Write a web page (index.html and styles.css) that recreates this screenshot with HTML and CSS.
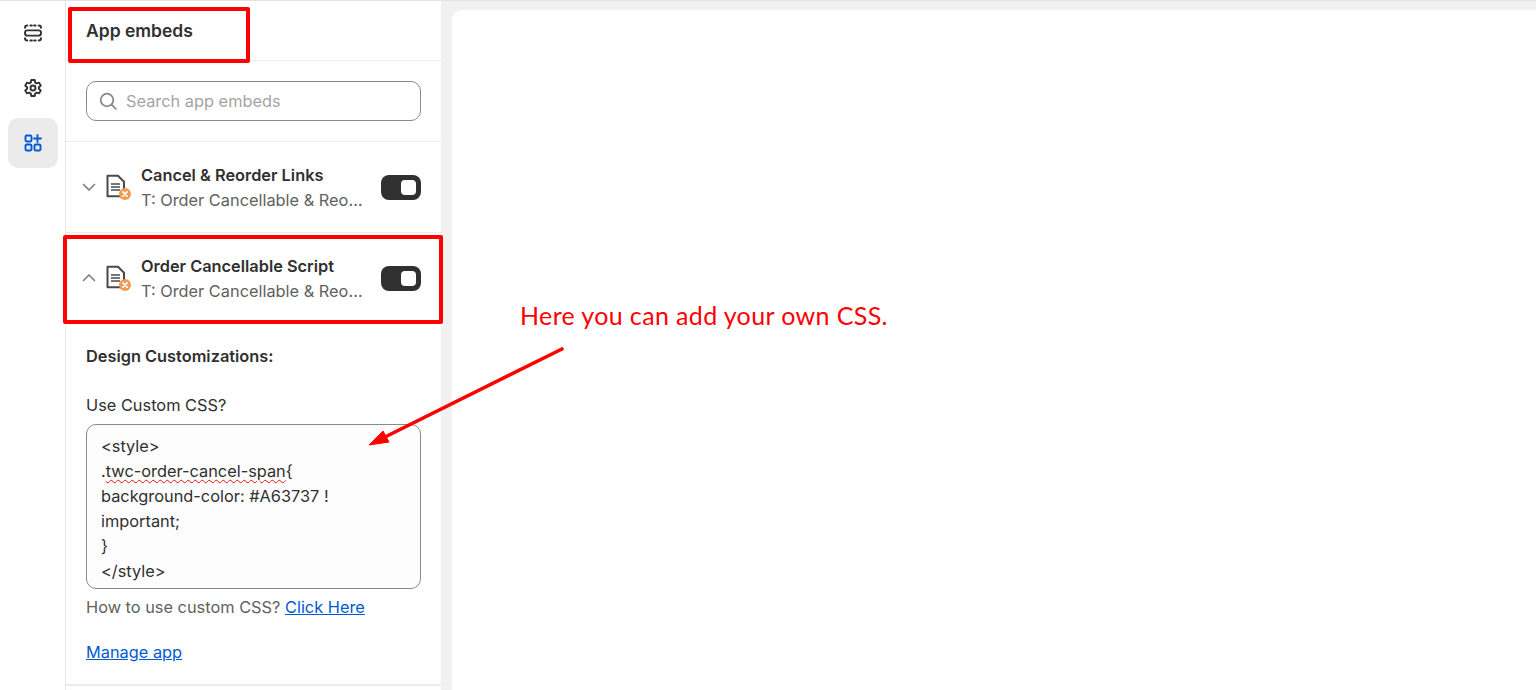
FILE: index.html
```html
<!DOCTYPE html>
<html lang="en">
<head>
<meta charset="utf-8">
<title>App embeds</title>
<link rel="stylesheet" href="styles.css">
</head>
<body>
<div class="app">
  <nav class="rail">
    <button class="rail-btn">
      <svg width="20" height="20" viewBox="0 0 20 20" fill="none" stroke="#303030" stroke-width="1.900" stroke-linecap="round">
        <rect x="2" y="7.400" width="16" height="5.200" rx="2.400"/>
        <path d="M2 4.800c0-1.400.9-2.300 2.300-2.300M7.300 2.500h1.600M11.100 2.500h1.600M15.700 2.500c1.400 0 2.300.9 2.300 2.300M2 15.200c0 1.400.9 2.300 2.300 2.300M7.300 17.500h1.600M11.100 17.500h1.600M15.700 17.500c1.400 0 2.300-.9 2.300-2.300"/>
      </svg>
    </button>
    <button class="rail-btn">
      <svg width="20" height="20" viewBox="0 0 20 20" fill="none" stroke="#303030" stroke-width="1.900" stroke-linejoin="round">
        <circle cx="10" cy="10" r="2.500"/>
        <path d="M8.300 2h3.400l.5 2.500 1.500.9 2.400-.8 1.700 3-1.900 1.600v1.600l1.900 1.600-1.700 3-2.400-.8-1.500.9-.5 2.500H8.300l-.5-2.500-1.500-.9-2.400.8-1.700-3 1.900-1.600V9.200L2.200 7.600l1.700-3 2.400.8 1.500-.9z"/>
      </svg>
    </button>
    <button class="rail-btn rail-btn-active">
      <svg width="20" height="20" viewBox="0 0 20 20" fill="none" stroke="#005bd3" stroke-width="1.900" stroke-linecap="round">
        <rect x="2.500" y="2.500" width="6" height="6" rx="1.200"/>
        <rect x="2.500" y="11.500" width="6" height="6" rx="1.200"/>
        <rect x="11.500" y="11.500" width="6" height="6" rx="1.200"/>
        <path d="M14.500 2v7M11 5.500h7"/>
      </svg>
    </button>
  </nav>

  <aside class="panel">
    <header class="panel-head"><h1 class="panel-title">App embeds</h1></header>

    <div class="search-wrap">
      <label class="search">
        <svg width="20" height="20" viewBox="0 0 20 20" fill="none" stroke="#8a8a8a" stroke-width="1.800" stroke-linecap="round">
          <circle cx="9" cy="9" r="6.300"/>
          <path d="M13.800 13.800l4 4"/>
        </svg>
        <input class="search-input" type="text" placeholder="Search app embeds">
      </label>
    </div>

    <section class="embed">
      <svg class="chev" width="16" height="16" viewBox="0 0 16 16" fill="none" stroke="#808080" stroke-width="1.700" stroke-linecap="round" stroke-linejoin="round"><path d="M2.500 5.500L8 11l5.500-5.500"/></svg>
      <svg class="doc" width="28" height="28" viewBox="0 0 28 28">
        <path d="M2.500 2.800h10.500l6 6v14.500H2.500z" fill="none" stroke="#4a4a4a" stroke-width="2" stroke-linejoin="round"/>
        <path d="M6 11h9M6 14h9M6 17h9" stroke="#4a4a4a" stroke-width="1.500"/>
        <circle cx="20" cy="21" r="6" fill="#f49a50"/>
        <path d="M17.900 18.900l4.200 4.200M22.100 18.900l-4.200 4.200" stroke="#fff" stroke-width="1.800" stroke-linecap="round"/>
      </svg>
      <div class="embed-text">
        <div class="embed-name">Cancel &amp; Reorder Links</div>
        <div class="embed-sub">T: Order Cancellable &amp; Reorder</div>
      </div>
      <span class="toggle"><span class="knob"></span></span>
    </section>

    <section class="embed">
      <svg class="chev" width="16" height="16" viewBox="0 0 16 16" fill="none" stroke="#808080" stroke-width="1.700" stroke-linecap="round" stroke-linejoin="round"><path d="M2.500 10.500L8 5l5.500 5.500"/></svg>
      <svg class="doc" width="28" height="28" viewBox="0 0 28 28">
        <path d="M2.500 2.800h10.500l6 6v14.500H2.500z" fill="none" stroke="#4a4a4a" stroke-width="2" stroke-linejoin="round"/>
        <path d="M6 11h9M6 14h9M6 17h9" stroke="#4a4a4a" stroke-width="1.500"/>
        <circle cx="20" cy="21" r="6" fill="#f49a50"/>
        <path d="M17.900 18.900l4.200 4.200M22.100 18.900l-4.200 4.200" stroke="#fff" stroke-width="1.800" stroke-linecap="round"/>
      </svg>
      <div class="embed-text">
        <div class="embed-name">Order Cancellable Script</div>
        <div class="embed-sub">T: Order Cancellable &amp; Reorder</div>
      </div>
      <span class="toggle"><span class="knob"></span></span>
    </section>

    <section class="settings">
      <h2 class="settings-title">Design Customizations:</h2>
      <div class="field-label">Use Custom CSS?</div>
      <div class="code-box">&lt;style&gt;
.<span class="misspelt">twc-order-cancel-span</span>{
background-color: #A63737 !
important;
}
&lt;/style&gt;</div>
      <p class="help">How to use custom CSS? <a href="#">Click Here</a></p>
      <a class="manage" href="#">Manage app</a>
    </section>
  </aside>

  <main class="canvas-wrap"><div class="canvas"></div></main>
</div>

<div class="mark mark-head"></div>
<div class="mark mark-row"></div>
<div class="note">Here you can add your own CSS.</div>
<svg class="arrow" width="210" height="110" viewBox="0 0 210 110">
  <path d="M202 9L27 96" stroke="#fe0000" stroke-width="3.600" stroke-linecap="round"/>
  <path d="M9 105L23 91L29 102z" fill="#fe0000" stroke="#fe0000" stroke-width="1"/>
</svg>
</body>
</html>
```
FILE: styles.css
```css
* { box-sizing: border-box; }
html, body { margin: 0; height: 100%; overflow: hidden; }
body {
  background: #fff;
  font-family: Inter, "Liberation Sans", sans-serif;
  color: #303030;
  position: relative;
}
.app {
  display: flex;
  height: 690px;
  border-top: 1px solid #e3e3e3;
}
.rail {
  width: 66px;
  flex: none;
  border-right: 1px solid #e6e6e6;
  padding: 7px 8px 0;
  display: flex;
  flex-direction: column;
  gap: 5px;
}
.rail-btn {
  width: 50px;
  height: 50px;
  border: 0;
  padding: 0;
  background: transparent;
  border-radius: 10px;
  display: flex;
  align-items: center;
  justify-content: center;
}
.rail-btn-active { background: #ebebeb; }
.panel {
  width: 375px;
  flex: none;
  display: flex;
  flex-direction: column;
}
.panel-head {
  height: 60px;
  flex: none;
  padding: 18px 20px 0;
  border-bottom: 1px solid #ebebeb;
}
.panel-title {
  margin: 0;
  font-size: 17.5px;
  line-height: 24px;
  font-weight: 600;
}
.search-wrap {
  flex: none;
  height: 81px;
  padding: 20px 20px 0;
  border-bottom: 1px solid #ebebeb;
}
.search {
  height: 40px;
  display: flex;
  align-items: center;
  gap: 8px;
  padding: 0 11px;
  border: 1px solid #8a8a8a;
  border-radius: 10px;
}
.search-input {
  flex: 1;
  min-width: 0;
  border: 0;
  outline: 0;
  padding: 0;
  background: transparent;
  font: 400 16.35px Inter, sans-serif;
}
.search-input::placeholder { color: #a4a4a4; opacity: 1; }
.embed {
  flex: none;
  height: 91px;
  padding: 2px 20px 0 15px;
  display: flex;
  align-items: center;
  border-bottom: 1px solid #ebebeb;
}
.chev { flex: none; margin-top: -2px; }
.doc { flex: none; margin: -2px 8px 0 8px; }
.embed-text { flex: 1; min-width: 0; padding-right: 16px; }
.embed-name {
  font-size: 16.35px;
  line-height: 25px;
  font-weight: 600;
  white-space: nowrap;
}
.embed-sub {
  font-size: 16.35px;
  line-height: 25px;
  color: #616161;
  white-space: nowrap;
  overflow: hidden;
  text-overflow: ellipsis;
}
.toggle {
  flex: none;
  width: 40px;
  height: 25px;
  margin-top: -2px;
  border-radius: 8px;
  background: #303030;
  display: flex;
  align-items: center;
  justify-content: flex-end;
  padding-right: 5px;
}
.knob {
  width: 15px;
  height: 15px;
  border-radius: 4px;
  background: #fff;
}
.settings {
  flex: 1;
  padding: 20px 20px 0;
  border-bottom: 2px solid #ebebeb;
  margin-bottom: 4px;
}
.settings-title {
  margin: 0 0 24px;
  font-size: 16.35px;
  line-height: 25px;
  font-weight: 600;
}
.field-label {
  font-size: 16.35px;
  line-height: 25px;
  margin-bottom: 6px;
}
.code-box {
  height: 165px;
  border: 1px solid #8a8a8a;
  border-radius: 10px;
  background: #fdfdfd;
  padding: 9px 14px 0;
  font-size: 16.35px;
  line-height: 25px;
  white-space: pre;
  overflow: hidden;
}
.misspelt {
  text-decoration: underline wavy #e81010 1.4px;
  text-underline-offset: 2px;
}
.help {
  margin: 6px 0 20px;
  font-size: 16.35px;
  line-height: 25px;
  color: #616161;
}
a { color: #005bd3; text-decoration: underline; }
.manage {
  display: block;
  font-size: 16.35px;
  line-height: 25px;
}
.canvas-wrap {
  flex: 1;
  min-width: 0;
  background: #f1f1f1;
  padding: 9px 0 0 11px;
}
.canvas {
  height: 100%;
  background: #fff;
  border-radius: 10px 0 0 0;
}
.mark {
  position: absolute;
  border: 4px solid #fe0000;
  border-radius: 2px;
}
.mark-head { left: 68px; top: 7px; width: 182px; height: 56px; }
.mark-row { left: 63px; top: 235px; width: 380px; height: 89px; }
.note {
  position: absolute;
  left: 520px;
  top: 300px;
  font-family: Lato, sans-serif;
  font-size: 25px;
  letter-spacing: .37px;
  line-height: 30px;
  color: #fe0000;
  white-space: nowrap;
}
.arrow {
  position: absolute;
  left: 360px;
  top: 340px;
}
```
